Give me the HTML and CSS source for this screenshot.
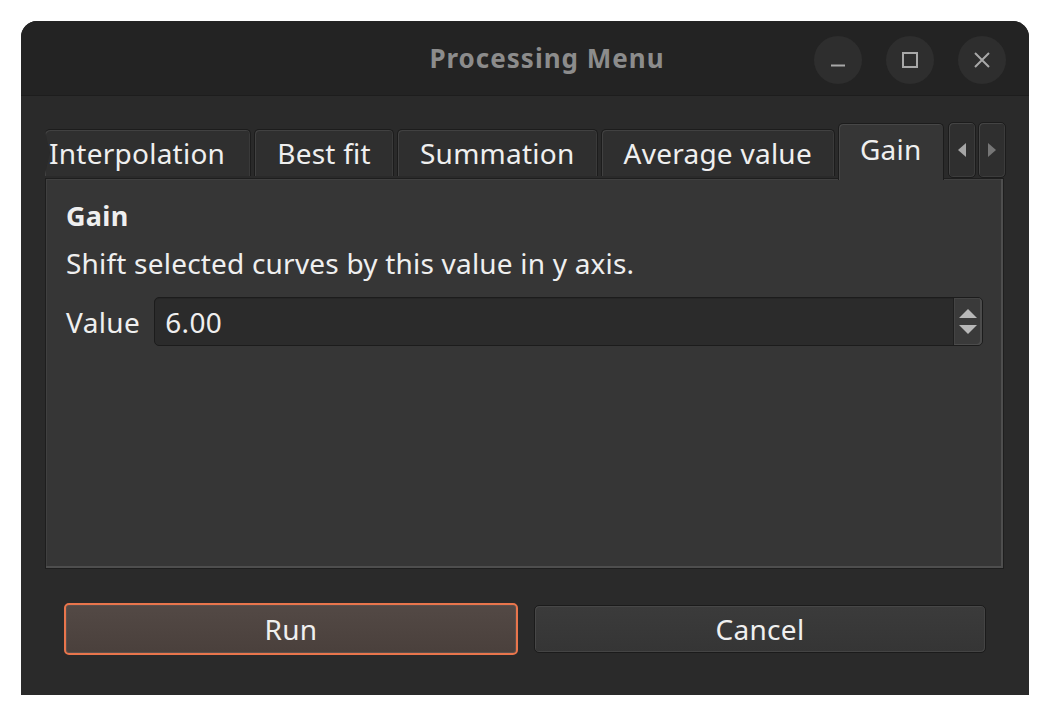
FILE: index.html
```html
<!DOCTYPE html>
<html>
<head>
<meta charset="utf-8">
<link rel="stylesheet" href="styles.css">
</head>
<body>
<div class="window">
  <div class="titlebar">
    <div class="title">Processing Menu</div>
    <div class="controls">
      <div class="ctl"><svg width="48" height="48" viewBox="0 0 48 48"><line x1="17" y1="29.5" x2="31" y2="29.5" stroke="#a8a8a8" stroke-width="2"/></svg></div>
      <div class="ctl"><svg width="48" height="48" viewBox="0 0 48 48"><rect x="17" y="17" width="14" height="14" fill="none" stroke="#a8a8a8" stroke-width="2"/></svg></div>
      <div class="ctl"><svg width="48" height="48" viewBox="0 0 48 48"><path d="M17 17 L31 31 M31 17 L17 31" stroke="#a8a8a8" stroke-width="2" fill="none"/></svg></div>
    </div>
  </div>
  <div class="content">
    <div class="tabbar">
      <div class="tab clipped">Interpolation</div>
      <div class="tab">Best fit</div>
      <div class="tab">Summation</div>
      <div class="tab">Average value</div>
      <div class="tab active">Gain</div>
      <div class="scrollers">
        <div class="scrollbtn"><svg width="12" height="16" viewBox="0 0 12 16"><path d="M10 1 L2 8 L10 15 Z" fill="#a5a5a5"/></svg></div>
        <div class="scrollbtn"><svg width="12" height="16" viewBox="0 0 12 16"><path d="M2 1 L10 8 L2 15 Z" fill="#767676"/></svg></div>
      </div>
    </div>
    <div class="pane">
      <div class="heading">Gain</div>
      <div class="desc">Shift selected curves by this value in y axis.</div>
      <div class="row">
        <div class="label">Value</div>
        <div class="spinbox">
          <div class="spinval">6.00</div>
          <div class="spinbtns">
            <svg width="20" height="12" viewBox="0 0 20 12"><path d="M1 10 L10 1 L19 10 Z" fill="#b8b8b8"/></svg>
            <svg width="20" height="12" viewBox="0 0 20 12"><path d="M1 2 L19 2 L10 11 Z" fill="#b8b8b8"/></svg>
          </div>
        </div>
      </div>
    </div>
    <div class="buttons">
      <div class="btn primary">Run</div>
      <div class="btn">Cancel</div>
    </div>
  </div>
</div>
</body>
</html>
```
FILE: styles.css
```css
html, body {
  margin: 0;
  padding: 0;
  background: #ffffff;
}
body {
  font-family: "Noto Sans", "DejaVu Sans", sans-serif;
  color: #efefef;
}
.window {
  margin: 21px 0 0 21px;
  width: 1008px;
  height: 674px;
  background: #2a2a2a;
  border-radius: 16px 16px 0 0;
  overflow: hidden;
  display: flex;
  flex-direction: column;
}
.titlebar {
  height: 74px;
  background: #232323;
  border-bottom: 1px solid #1d1d1d;
  display: flex;
  align-items: center;
  position: relative;
}
.title {
  flex: 1;
  text-align: center;
  padding-left: 44px;
  font-weight: bold;
  font-size: 26px;
  color: #8c8c8c;
  letter-spacing: 1px;
}
.controls {
  position: absolute;
  right: 23px;
  top: 15px;
  display: flex;
  gap: 24px;
}
.ctl {
  width: 48px;
  height: 48px;
  border-radius: 50%;
  background: #2e2e2e;
}
.ctl svg { display: block; }
.content {
  flex: 1;
  display: flex;
  flex-direction: column;
  padding: 25px 25px 0 24px;
}
.tabbar {
  display: flex;
  align-items: flex-end;
  height: 57px;
  gap: 3px;
  position: relative;
  z-index: 2;
}
.tab {
  height: 47px;
  margin-bottom: 2px;
  padding: 0 22px;
  box-sizing: border-box;
  display: flex;
  align-items: center;
  font-size: 28px;
  background: #2f2f2f;
  border: 1px solid #1c1c1c;
  border-bottom: none;
  border-radius: 5px 5px 0 0;
  box-shadow: inset 1px 1px 0 #414141, inset -1px 0 0 #3a3a3a;
  white-space: nowrap;
  letter-spacing: 0.25px;
}
.tab.clipped {
  padding-left: 4px;
  border-left: none;
  clip-path: polygon(0 0, 100% 0, 100% 100%, 0 100%, 0 96%, 5px 50%, 0 4%);
  padding-right: 25px;
}
.tab.active {
  height: 57px;
  margin-bottom: -2px;
  padding: 0 21px 6px 21px;
  background: #363636;
  box-shadow: inset 1px 1px 0 #474747;
}
.scrollers {
  display: flex;
  gap: 2px;
  align-self: flex-start;
  margin-top: 1px;
  margin-left: 1px;
}
.scrollbtn {
  width: 28px;
  height: 56px;
  box-sizing: border-box;
  background: #2f2f2f;
  border: 1px solid #1c1c1c;
  border-radius: 5px;
  box-shadow: inset 1px 1px 0 #444, inset -1px -1px 0 #3c3c3c;
  display: flex;
  align-items: center;
  justify-content: center;
}
.scrollbtn svg { display: block; }
.pane {
  height: 391px;
  box-sizing: border-box;
  background: #363636;
  border: 1px solid #1e1e1e;
  box-shadow: inset -2px -2px 0 #4e4e4e, inset 1px 1px 0 #404040;
  padding: 18px 20px 0 20px;
  position: relative;
  z-index: 1;
}
.heading {
  font-weight: bold;
  font-size: 27px;
  line-height: 38px;
  letter-spacing: 0.3px;
}
.desc {
  font-size: 28px;
  line-height: 38px;
  margin-top: 9px;
  letter-spacing: 0.2px;
}
.row {
  display: flex;
  align-items: center;
  gap: 14px;
  margin-top: 15px;
}
.label {
  font-size: 28px;
  letter-spacing: 0.4px;
}
.spinbox {
  flex: 1;
  height: 49px;
  box-sizing: border-box;
  display: flex;
  background: #2b2b2b;
  border: 1px solid #1c1c1c;
  border-radius: 5px;
  box-shadow: inset 0 1px 0 #262626;
  overflow: hidden;
}
.spinval {
  flex: 1;
  font-size: 28px;
  padding-left: 10px;
  display: flex;
  align-items: center;
  letter-spacing: 0.3px;
}
.spinbtns {
  width: 29px;
  box-sizing: border-box;
  background: #3a3a3a;
  border-left: 1px solid #1f1f1f;
  box-shadow: inset -2px -1px 0 #4b4b4b, inset 1px 1px 0 #444;
  border-radius: 0 4px 4px 0;
  display: flex;
  flex-direction: column;
  align-items: center;
  justify-content: center;
  gap: 3px;
}
.spinbtns svg { display: block; }
.buttons {
  display: flex;
  gap: 16px;
  margin-top: 36px;
  padding: 0 18px 0 19px;
}
.btn {
  flex: 1;
  height: 48px;
  box-sizing: border-box;
  display: flex;
  align-items: center;
  justify-content: center;
  font-size: 28px;
  letter-spacing: 0.3px;
  background: linear-gradient(#3b3b3b, #353535);
  border: 1px solid #1b1b1b;
  border-radius: 5px;
  box-shadow: inset 1px 1px 0 #474747, inset -1px -1px 0 #444;
}
.btn.primary {
  background: linear-gradient(#534945, #4a403c);
  border: 2px solid #e9754c;
  box-shadow: inset 0 0 0 1px #5b504c;
  height: 52px;
  margin: -2px 0;
}
```
